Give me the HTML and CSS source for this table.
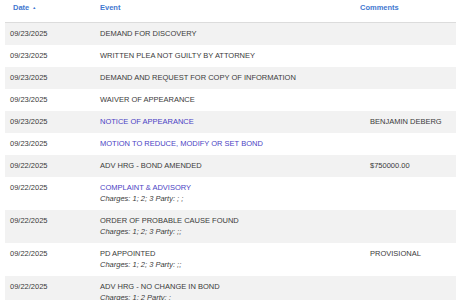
FILE: index.html
```html
<!DOCTYPE html>
<html>
<head>
<meta charset="utf-8">
<link rel="stylesheet" href="styles.css">
</head>
<body>
<table class="events">
  <thead>
    <tr>
      <th class="c-date">Date <span class="sort">&#9650;</span></th>
      <th class="c-event">Event</th>
      <th class="c-comm">Comments</th>
    </tr>
  </thead>
  <tbody>
    <tr><td>09/23/2025</td><td>DEMAND FOR DISCOVERY</td><td></td></tr>
    <tr><td>09/23/2025</td><td>WRITTEN PLEA NOT GUILTY BY ATTORNEY</td><td></td></tr>
    <tr><td>09/23/2025</td><td>DEMAND AND REQUEST FOR COPY OF INFORMATION</td><td></td></tr>
    <tr><td>09/23/2025</td><td>WAIVER OF APPEARANCE</td><td></td></tr>
    <tr><td>09/23/2025</td><td><a class="link">NOTICE OF APPEARANCE</a></td><td>BENJAMIN DEBERG</td></tr>
    <tr><td>09/23/2025</td><td><a class="link">MOTION TO REDUCE, MODIFY OR SET BOND</a></td><td></td></tr>
    <tr><td>09/22/2025</td><td>ADV HRG - BOND AMENDED</td><td>$750000.00</td></tr>
    <tr><td>09/22/2025</td><td><a class="link">COMPLAINT &amp; ADVISORY</a><div class="charges">Charges: 1; 2; 3 Party: ; ;</div></td><td></td></tr>
    <tr><td>09/22/2025</td><td>ORDER OF PROBABLE CAUSE FOUND<div class="charges">Charges: 1; 2; 3 Party: ;;</div></td><td></td></tr>
    <tr><td>09/22/2025</td><td>PD APPOINTED<div class="charges">Charges: 1; 2; 3 Party: ;;</div></td><td>PROVISIONAL</td></tr>
    <tr><td>09/22/2025</td><td>ADV HRG - NO CHANGE IN BOND<div class="charges">Charges: 1; 2 Party: ;</div></td><td></td></tr>
  </tbody>
</table>
</body>
</html>
```
FILE: styles.css
```css
html, body {
  margin: 0;
  padding: 0;
  background: #ffffff;
}
body {
  padding-left: 5px;
  font-family: "Liberation Sans", Arial, sans-serif;
  font-size: 7.5px;
  color: #3a3a3a;
  overflow: hidden;
}
.events {
  border-collapse: collapse;
  width: 470px;
  table-layout: fixed;
}
.events th {
  text-align: left;
  font-weight: bold;
  color: #3f78d0;
  height: 22px;
  padding: 3px 5px 0 5px;
  vertical-align: top;
  line-height: 9px;
  border-bottom: 1px solid #dcdcdc;
  box-sizing: border-box;
}
.c-date { width: 90px; }
.events th.c-date { padding-left: 8px; }
.c-event { width: 270px; }
.c-comm { width: 110px; }
.events th.c-comm { text-indent: -10px; }
.sort {
  font-size: 4px;
  vertical-align: 1px;
  margin-left: 1px;
}
.events td {
  padding: 5.5px 5px;
  line-height: 11px;
  vertical-align: top;
  white-space: nowrap;
  overflow: hidden;
}
.events tbody tr:nth-child(odd) td {
  background: #f2f2f2;
}
.link {
  color: #4b3fc4;
  text-decoration: none;
}
.charges {
  font-style: italic;
  color: #3a3a3a;
}
```
